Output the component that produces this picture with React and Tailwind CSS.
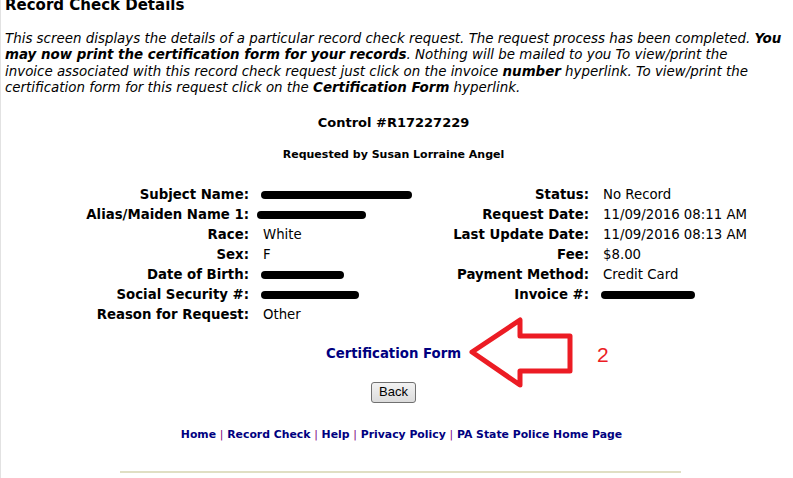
import React from "react";

const font = { fontFamily: '"DejaVu Sans", Verdana, sans-serif' };

function Bar({ w, ml = 0 }) {
  return (
    <span
      className="inline-block h-[8px] rounded-full bg-black align-middle"
      style={{ width: w, marginLeft: ml }}
    />
  );
}

const left = [
  ["Subject Name:", <Bar w={151} ml={-2} />],
  ["Alias/Maiden Name 1:", <Bar w={109} ml={-6} />],
  ["Race:", "White"],
  ["Sex:", "F"],
  ["Date of Birth:", <Bar w={83} ml={-2} />],
  ["Social Security #:", <Bar w={98} ml={-2} />],
  ["Reason for Request:", "Other"],
];
const right = [
  ["Status:", "No Record"],
  ["Request Date:", "11/09/2016 08:11 AM"],
  ["Last Update Date:", "11/09/2016 08:13 AM"],
  ["Fee:", "$8.00"],
  ["Payment Method:", "Credit Card"],
  ["Invoice #:", <Bar w={94} ml={-2} />],
  ["", ""],
];

export default function App() {
  return (
    <div
      className="relative w-[793px] h-[478px] overflow-hidden bg-white text-black border-l border-[#e2e2e2]"
      style={font}
    >
      <h1 className="mt-[-4px] pl-[4px] text-[15px] font-bold leading-[18px] whitespace-nowrap">
        Record Check Details
      </h1>
      <p className="mt-[17px] pl-[4px] text-[13.4px] italic leading-[16.4px] whitespace-nowrap">
        This screen displays the details of a particular record check request. The request process has been completed. <b>You</b>
        <br />
        <b>may now print the certification form for your records</b>. Nothing will be mailed to you To view/print the
        <br />
        invoice associated with this record check request just click on the invoice <b>number</b> hyperlink. To view/print the
        <br />
        certification form for this request click on the <b>Certification Form</b> hyperlink.
      </p>
      <div className="w-[785px]">
        <div className="mt-[18px] text-center text-[13px] font-bold leading-[16px]">Control #R17227229</div>
        <div className="mt-[17px] text-center text-[11px] font-bold leading-[14px]">Requested by Susan Lorraine Angel</div>
      </div>
      <div className="mt-[23px] grid grid-cols-[262px_178px_162px_1fr] text-[13.3px] leading-[20px]">
        {left.map((l, i) => (
          <React.Fragment key={i}>
            <div className="pr-[14px] text-right font-bold whitespace-nowrap">{l[0]}</div>
            <div className="whitespace-nowrap">{l[1]}</div>
            <div className="pr-[14px] text-right font-bold whitespace-nowrap">{right[i][0]}</div>
            <div className="whitespace-nowrap">{right[i][1]}</div>
          </React.Fragment>
        ))}
      </div>
      <div className="w-[785px]">
        <div className="mt-[21px] text-center text-[13.3px] font-bold leading-[16px]">
          <a href="#" className="text-[#000080] no-underline">Certification Form</a>
        </div>
        <div className="mt-[20px] flex justify-center">
          <button
            className="h-[21px] w-[45px] rounded-[3px] border border-[#707070] bg-gradient-to-b from-[#f2f2f2] to-[#dcdcdc] text-[13px] leading-[18px] text-black"
            style={{ fontFamily: '"Liberation Sans", Arial, sans-serif' }}
          >
            Back
          </button>
        </div>
      </div>
      <div className="mt-[25px] w-[793px] pl-[8px] text-center text-[10.85px] font-bold leading-[14px] text-[#000080]">
        <a href="#">Home</a> <span className="font-normal text-[#800080]">|</span>{" "}
        <a href="#">Record Check</a> <span className="font-normal text-[#800080]">|</span>{" "}
        <a href="#">Help</a> <span className="font-normal text-[#800080]">|</span>{" "}
        <a href="#">Privacy Policy</a> <span className="font-normal text-[#800080]">|</span>{" "}
        <a href="#">PA State Police Home Page</a>
      </div>
      <div className="ml-[119px] mt-[29px] h-[2px] w-[561px] bg-[#e0dfc4]" />

      {/* annotation arrow */}
      <svg className="absolute left-[460px] top-[310px]" width="160" height="90" viewBox="460 310 160 90">
        <polygon
          points="471,352 519,320 519,336 569,336 569,371 519,371 519,385"
          fill="none"
          stroke="#ec1c24"
          strokeWidth="5"
          strokeLinejoin="round"
        />
      </svg>
      <span
        className="absolute left-[596px] top-[343px] text-[21px] leading-[24px] text-[#ec1c24]"
        style={{ fontFamily: '"Liberation Sans", Arial, sans-serif' }}
      >
        2
      </span>
    </div>
  );
}
